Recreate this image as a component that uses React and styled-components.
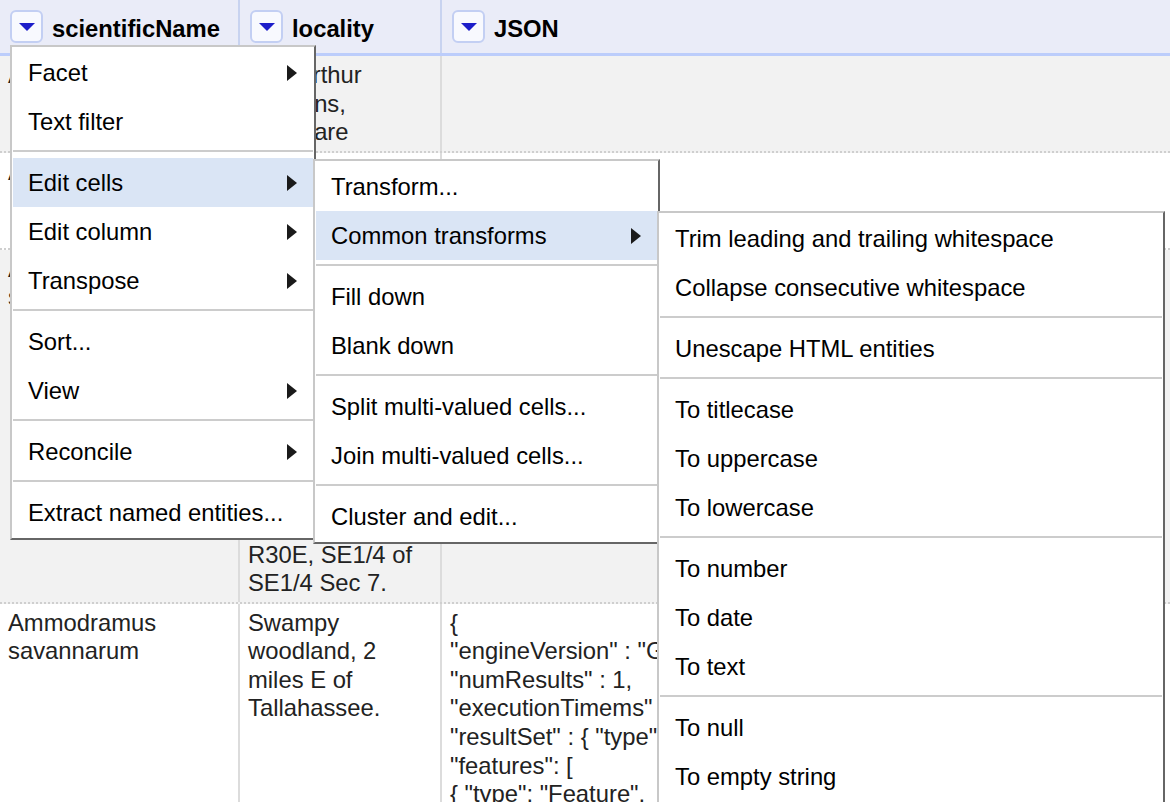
import React from 'react';
import styled, { createGlobalStyle } from 'styled-components';

const GlobalStyle = createGlobalStyle`
  *, *::before, *::after { box-sizing: border-box; }
  html, body { margin: 0; padding: 0; background: #fff; overflow: hidden; }
  body { font-family: "Liberation Sans", Arial, Helvetica, sans-serif; }
`;

const columns = '240px 202px 1fr';

const mainItems = [
  { label: 'Facet', sub: true },
  { label: 'Text filter' },
  'sep',
  { label: 'Edit cells', sub: true, active: true },
  { label: 'Edit column', sub: true },
  { label: 'Transpose', sub: true },
  'sep',
  { label: 'Sort...' },
  { label: 'View', sub: true },
  'sep',
  { label: 'Reconcile', sub: true },
  'sep',
  { label: 'Extract named entities...' },
];

const editCellsItems = [
  { label: 'Transform...' },
  { label: 'Common transforms', sub: true, active: true },
  'sep',
  { label: 'Fill down' },
  { label: 'Blank down' },
  'sep',
  { label: 'Split multi-valued cells...' },
  { label: 'Join multi-valued cells...' },
  'sep',
  { label: 'Cluster and edit...' },
];

const transformItems = [
  { label: 'Trim leading and trailing whitespace' },
  { label: 'Collapse consecutive whitespace' },
  'sep',
  { label: 'Unescape HTML entities' },
  'sep',
  { label: 'To titlecase' },
  { label: 'To uppercase' },
  { label: 'To lowercase' },
  'sep',
  { label: 'To number' },
  { label: 'To date' },
  { label: 'To text' },
  'sep',
  { label: 'To null' },
  { label: 'To empty string' },
];

const json = `{
"engineVersion" : "GLC:4.95|U:1.01374|eng:1.0",
"numResults" : 1,
"executionTimems" : 2371.1,
"resultSet" : { "type": "FeatureCollection",
"features": [
{ "type": "Feature",
"geometry": {"type": "Point", "coordinates": [-84.24, 30.45]},
"properties": { "parsePattern" : "TALLAHASSEE" }`;

const rows = [
  {
    name: 'Ammodramus',
    locality: 'Port Arthur Gardens, Delaware',
    json: '',
  },
  {
    name: 'Ammodramus',
    locality: 'Near Lake\nJackson, Leon\nCounty.',
    json: '',
  },
  {
    name: 'Ammodramus savannarum',
    locality:
      'Archbold\nBiological\nStation, ca. 8\nmiles S of Lake\nPlacid,\nHighlands Co.,\nFlorida. Open\nscrub with\nscattered\nOld field\nR30E, SE1/4 of\nSE1/4 Sec 7.',
    json: '',
  },
  {
    name: 'Ammodramus savannarum',
    locality: 'Swampy woodland, 2 miles E of Tallahassee.',
    json,
  },
];

function MenuList({ items }) {
  return items.map((item, i) =>
    item === 'sep' ? (
      <Separator key={i} />
    ) : (
      <MenuItem key={i} $active={item.active}>
        <span>{item.label}</span>
        {item.sub && <SubArrow />}
      </MenuItem>
    )
  );
}

export default function App() {
  return (
    <Page>
      <GlobalStyle />
      <HeaderRow>
        {['scientificName', 'locality', 'JSON'].map((title, i) => (
          <HeaderCell key={title} $last={i === 2}>
            <DropButton>
              <DownTriangle />
            </DropButton>
            <HeaderLabel>{title}</HeaderLabel>
          </HeaderCell>
        ))}
      </HeaderRow>

      {rows.map((row, i) => (
        <Row key={i} $shaded={i % 2 === 0}>
          <Cell>{row.name}</Cell>
          <Cell>{row.locality}</Cell>
          <Cell $last>{row.json}</Cell>
        </Row>
      ))}

      <MainMenu>
        <MenuList items={mainItems} />
      </MainMenu>
      <EditCellsMenu>
        <MenuList items={editCellsItems} />
      </EditCellsMenu>
      <TransformMenu>
        <MenuList items={transformItems} />
      </TransformMenu>
    </Page>
  );
}

const Page = styled.div`
  position: relative;
  width: 1170px;
  height: 802px;
  overflow: hidden;
  font-size: 23.8px;
  color: #222;
`;

const HeaderRow = styled.div`
  display: grid;
  grid-template-columns: ${columns};
  height: 56px;
  background: #eaecf8;
  border-bottom: 3px solid #bccdfb;
`;

const HeaderCell = styled.div`
  display: flex;
  align-items: center;
  gap: 9px;
  padding-left: 10px;
  border-right: ${(p) => (p.$last ? 'none' : '2px solid #c8d3f0')};
`;

const DropButton = styled.div`
  width: 33px;
  height: 33px;
  display: flex;
  align-items: center;
  justify-content: center;
  background: #f8f9fe;
  border: 2px solid #c3cff3;
  border-radius: 6px;
`;

const DownTriangle = styled.div`
  width: 0;
  height: 0;
  margin-top: 1px;
  border-left: 8px solid transparent;
  border-right: 8px solid transparent;
  border-top: 8px solid #1c1dc9;
`;

const HeaderLabel = styled.span`
  font-weight: bold;
  color: #000;
  margin-top: 4px;
`;

const Row = styled.div`
  display: grid;
  grid-template-columns: ${columns};
  background: ${(p) => (p.$shaded ? '#f2f2f2' : '#fff')};
  border-bottom: 2px dotted #cfcfcf;
`;

const Cell = styled.div`
  padding: 5px 8px 4px 8px;
  line-height: 28.6px;
  white-space: pre-line;
  overflow: hidden;
  border-right: ${(p) => (p.$last ? 'none' : '2px solid #dcdcdc')};
`;

const Menu = styled.div`
  position: absolute;
  background: #fff;
  border: 2px solid;
  border-color: #c8c8c8 #666 #666 #c8c8c8;
  padding: 1px;
  color: #000;
`;

const MainMenu = styled(Menu)`
  left: 10px;
  top: 45px;
  width: 306px;
  z-index: 1;
`;

const EditCellsMenu = styled(Menu)`
  left: 313px;
  top: 159px;
  width: 347px;
  z-index: 2;
`;

const TransformMenu = styled(Menu)`
  left: 657px;
  top: 211px;
  width: 508px;
  z-index: 3;
`;

const MenuItem = styled.div`
  height: 49px;
  display: flex;
  align-items: center;
  justify-content: space-between;
  padding: 0 16px 0 15px;
  white-space: nowrap;
  background: ${(p) => (p.$active ? '#dae5f5' : 'transparent')};
`;

const SubArrow = styled.div`
  width: 0;
  height: 0;
  border-left: 10px solid #1a1a1a;
  border-top: 8px solid transparent;
  border-bottom: 8px solid transparent;
`;

const Separator = styled.div`
  height: 2px;
  margin: 4px 0 6px;
  background: #cccccc;
`;
